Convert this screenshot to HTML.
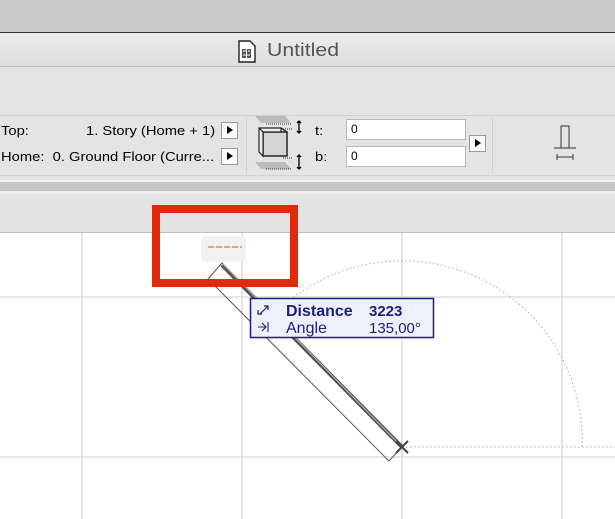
<!DOCTYPE html>
<html><head><style>
body{margin:0;width:615px;height:519px;overflow:hidden;font-family:"Liberation Sans",sans-serif;position:relative;background:#fff}
.a{position:absolute}
.t{position:absolute;font-size:12.5px;transform:scaleX(1.18);transform-origin:0 0;white-space:nowrap}
.btn{position:absolute;width:17px;height:17px;border:1px solid #9a9a9a;background:#fafafa;box-sizing:border-box}
.btn:after{content:"";position:absolute;left:5px;top:3px;border-left:6px solid #000;border-top:4.5px solid transparent;border-bottom:4.5px solid transparent}
.in{position:absolute;background:#fff;border:1px solid #b8b8b8;box-sizing:border-box;font-size:12px;padding:2px 4px}
</style></head><body>
<div class="a" style="left:0;top:0;width:615px;height:32px;background:#c9c9c9"></div>
<div class="a" style="left:0;top:32px;width:615px;height:1px;background:#333"></div>
<div class="a" style="left:0;top:33px;width:615px;height:33px;background:linear-gradient(#ececec,#dedede)"></div>
<div class="a" style="left:0;top:66px;width:615px;height:1px;background:#b8b8b8"></div>
<div class="a" style="left:0;top:67px;width:615px;height:113px;background:#e4e4e4"></div>
<div class="a" style="left:0;top:115px;width:615px;height:1px;background:#d0d0d0"></div>
<div class="a" style="left:0;top:175px;width:615px;height:1px;background:#d4d4d4"></div>
<div class="a" style="left:0;top:180px;width:615px;height:2px;background:#f2f2f2"></div>
<div class="a" style="left:0;top:182px;width:615px;height:9px;background:#c6c6c6"></div>
<div class="a" style="left:0;top:191px;width:615px;height:3px;background:#f0f0f0"></div>
<div class="a" style="left:0;top:194px;width:615px;height:38px;background:#e3e3e3"></div>
<div class="a" style="left:0;top:232px;width:615px;height:1px;background:#bdbdbd"></div>
<!-- title -->
<svg class="a" style="left:238px;top:40px" width="18" height="23" viewBox="0 0 18 23"><path d="M1 1h11l5 5v16H1z" fill="#fff" stroke="#222" stroke-width="1.4"/><rect x="4" y="9" width="9" height="9" fill="#555"/><path d="M5 11h3M10 11h2M5 15h7M8.5 9v9" stroke="#fff"/></svg>
<div class="t" style="left:267px;top:40px;font-size:18px;color:#555">Untitled</div>
<!-- toolbar -->
<div class="t" style="left:1px;top:124px">Top:</div>
<div class="t" style="left:86px;top:124px">1. Story (Home + 1)</div>
<div class="t" style="left:1px;top:150px">Home:&nbsp; 0. Ground Floor (Curre...</div>
<div class="btn" style="left:221px;top:122px"></div>
<div class="btn" style="left:221px;top:148px"></div>
<div class="a" style="left:246px;top:117px;width:1px;height:57px;background:#d2d2d2"></div>
<div class="a" style="left:492px;top:117px;width:1px;height:57px;background:#d2d2d2"></div>
<svg class="a" style="left:250px;top:115px" width="60" height="60" viewBox="250 115 60 60">
<path d="M255 116h30l6 7h-30z M255 162h30l6 7h-30z" fill="#bbb"/>
<path d="M266 124h26M283 129h10M283 158h10M266 169h26" stroke="#333" stroke-dasharray="1 1"/>
<path d="M263 132h24v24h-24z" fill="#d4d4d4" stroke="#222" stroke-width="1.5"/>
<path d="M259 128h22v4h-18v24l-4-4z" fill="#eee" stroke="#222" stroke-width="1.2"/>
<path d="M259 128l4 4M281 128l6 4" stroke="#222" stroke-width="1.2"/>
<path d="M299 121v12M299 155v14M297 123l2-2 2 2M297 131l2 2 2-2M297 157l2-2 2 2M297 167l2 2 2-2" stroke="#000" fill="none" stroke-width="1.3"/>
</svg>
<div class="t" style="left:315px;top:124px">t:</div>
<div class="t" style="left:315px;top:150px">b:</div>
<div class="in" style="left:346px;top:119px;width:120px;height:21px">0</div>
<div class="in" style="left:346px;top:146px;width:120px;height:21px">0</div>
<div class="btn" style="left:469px;top:135px"></div>
<svg class="a" style="left:552px;top:125px" width="30" height="36" viewBox="0 0 30 36"><path d="M9 1h8v22H9zM2 23h22M5 32h16M5 29v6M21 29v6" stroke="#333" fill="none"/></svg>
<!-- canvas -->
<svg class="a" style="left:0;top:233px" width="615" height="286" viewBox="0 233 615 286">
<g stroke="#d6d6d6" stroke-width="1.2"><path d="M82 233v286M242 233v286M402 233v286M562 233v286M0 297h615M0 457h615"/></g>
<rect x="201" y="236" width="45" height="26" rx="4" fill="#f1f1f1"/>
<path d="M208 247h34" stroke="#f6a35a" stroke-width="2" stroke-dasharray="6 2"/>
<path d="M290 300 A180 180 0 0 1 582 447" fill="none" stroke="#aaa" stroke-dasharray="1.5 2.5"/>
<path d="M402 447h213" stroke="#aaa" stroke-dasharray="1.5 2.5"/>
<path d="M222 263 L402 447 L389 461 L208 279 Z" fill="none" stroke="#555" stroke-width="1"/>
<path d="M222 265 L402 447" stroke="#555" stroke-width="4"/>
<path d="M223 264 L401 446" stroke="#bbb" stroke-width="1"/>
<path d="M396 441l12 12M396 453l12-12" stroke="#444" stroke-width="2"/>
<rect x="250.5" y="298.5" width="183" height="39" fill="#eef0fc" stroke="#1c1f7c" stroke-width="1.5"/>
<path d="M260 314l8-8M264 306h4v4M258 310v4h4" stroke="#1c1f7c" fill="none" stroke-width="1.2"/>
<path d="M258 327h8M262 323l4 4-4 4M268 322v10" stroke="#1c1f7c" fill="none" stroke-width="1.1"/>
<text x="286" y="316" font-size="16" font-weight="bold" fill="#1c1f7c" font-family="Liberation Sans">Distance</text>
<text x="369" y="316" font-size="15" font-weight="bold" fill="#1c1f7c" font-family="Liberation Sans">3223</text>
<text x="286" y="333" font-size="16" fill="#1c1f7c" font-family="Liberation Sans">Angle</text>
<text x="369" y="333" font-size="15" fill="#1c1f7c" font-family="Liberation Sans">135,00°</text>
</svg>
<div class="a" style="left:152px;top:205px;width:146px;height:82px;border:8px solid #e02a0a;box-sizing:border-box"></div>
</body></html>
